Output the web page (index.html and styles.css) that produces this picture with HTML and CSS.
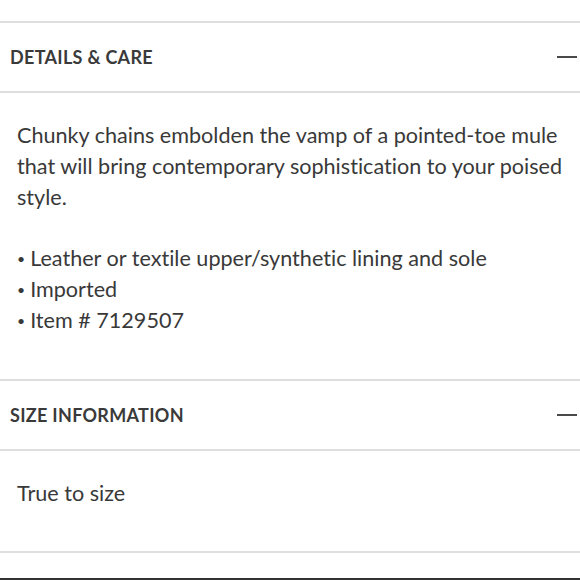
FILE: index.html
```html
<!DOCTYPE html>
<html>
<head>
<meta charset="utf-8">
<link rel="stylesheet" href="styles.css">
</head>
<body>
<div class="page">
  <section class="acc">
    <div class="acc-head">
      <h2 class="acc-title">DETAILS &amp; CARE</h2>
      <span class="minus"></span>
    </div>
    <div class="acc-body">
      <p class="txt">Chunky chains embolden the vamp of a pointed-toe mule that will bring contemporary sophistication to your poised style.</p>
      <ul class="list">
        <li><span class="dot">•</span>Leather or textile upper/synthetic lining and sole</li>
        <li><span class="dot">•</span>Imported</li>
        <li><span class="dot">•</span>Item # 7129507</li>
      </ul>
    </div>
  </section>
  <section class="acc">
    <div class="acc-head">
      <h2 class="acc-title">SIZE INFORMATION</h2>
      <span class="minus"></span>
    </div>
    <div class="acc-body short">
      <p class="txt">True to size</p>
    </div>
  </section>
  <div class="next"></div>
</div>
</body>
</html>
```
FILE: styles.css
```css
html, body { margin: 0; padding: 0; background: #fff; }
body { font-family: Lato, "Open Sans", sans-serif; color: #393939; width: 580px; height: 580px; overflow: hidden; font-variant-ligatures: none; }
.page { padding-top: 21px; }
.acc { border-top: 2px solid #dedede; }
.acc-head { height: 68px; display: flex; align-items: center; justify-content: space-between; padding: 0 3px 0 10px; border-bottom: 2px solid #dedede; }
.acc-title { margin: 0; font-size: 18px; font-weight: 700; letter-spacing: 0.3px; color: #3a3a3a; }
.minus { width: 20px; height: 2px; background: #4a4a4a; }
.acc-body { padding: 27px 10px 43px 17px; font-size: 21.6px; line-height: 31px; }
.acc-body.short { padding-top: 27px; padding-bottom: 42px; }
.txt { margin: 0; }
.list { list-style: none; margin: 30px 0 0; padding: 0; }
.dot { font-size: 14px; margin-right: 5px; vertical-align: 2px; }
.next { height: 25px; border-top: 2px solid #dedede; border-bottom: 2px solid #333; }
```
